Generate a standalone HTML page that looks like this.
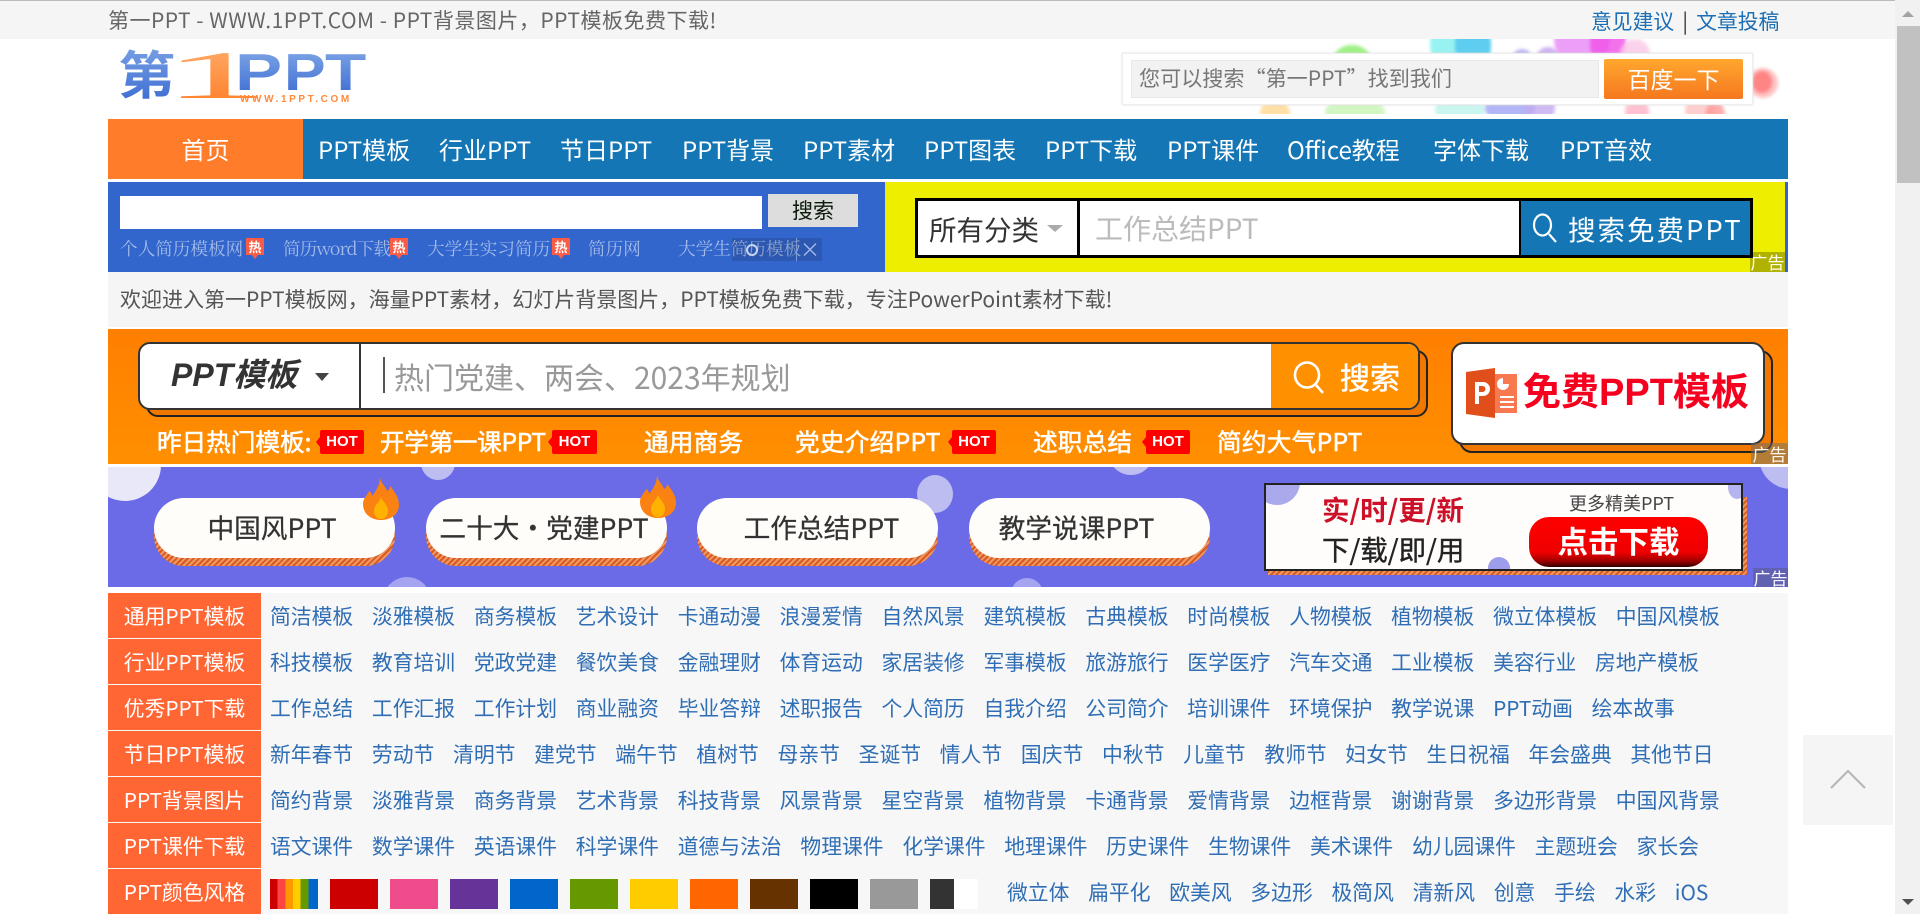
<!DOCTYPE html>
<html lang="zh-CN"><head><meta charset="utf-8"><title>第一PPT</title>
<style>
html,body{margin:0;padding:0;width:1920px;height:914px;overflow:hidden;background:#fff}
body{position:relative;font-family:"Noto Sans CJK SC","Liberation Sans",sans-serif;color:#333}
.a{position:absolute;white-space:nowrap}
.nav{top:119px;height:60px;line-height:59px;font-size:24px;color:#fff}
.row{position:absolute;left:108px;width:1680px;height:45px}
.lab{position:absolute;left:0;top:0;width:153px;height:45px;background:#ff6633;color:#fff;text-align:center;line-height:45px;font-size:20.8px}
.ln{position:absolute;left:162px;top:0;height:45px;line-height:45px;font-size:20.8px;color:#2f6eb5;display:flex;gap:18.74px;white-space:nowrap}
.sw{position:absolute;top:879px;width:48px;height:30px}
.ss{top:238px;line-height:22px;font-size:17.6px;font-family:"Noto Serif CJK SC",serif;color:#a3bbe9}
.hot{position:absolute;top:238px;width:18px;height:17px;background:#fb5c45;color:#fff;font-size:13px;line-height:17px;text-align:center;font-weight:700}
.hot:after{content:"";position:absolute;left:6px;top:17px;border:3px solid transparent;border-top:4px solid #fb5c45}
.ad{position:absolute;color:#fff;font-size:17px;text-align:center;opacity:.95}
.bt{top:427px;line-height:28px;font-size:24.6px;color:#fff;font-weight:400;-webkit-text-stroke:.55px #fff}
.hb{position:absolute;top:430px;height:24px;line-height:24px;background:#f00;color:#fff;font-size:15px;font-weight:700;text-align:center;border-radius:2px;font-family:"Liberation Sans",sans-serif}
.hb:before{content:"";position:absolute;left:-4px;top:7px;border:5px solid transparent;border-left:0;border-right:4px solid #f00}
.c{position:absolute;border-radius:50%}
.pill{position:absolute;top:498px;width:241px;height:60px;background:#fffdf9;border-radius:30px;text-align:center;line-height:58px;font-size:26.7px;color:#333;-webkit-text-stroke:.25px #333}
.ps{position:absolute;top:506px;width:241px;height:60px;border-radius:30px;background:repeating-linear-gradient(135deg,#d95a24 0 2px,#ee9a60 2px 4px)}
.b{position:absolute;border-radius:50%;filter:blur(1.5px);opacity:.8}
</style></head><body>

<!-- top bar -->
<div class="a" style="left:0;top:0;width:1895px;height:39px;background:#f5f5f5;border-top:1px solid #bbb;box-sizing:border-box"></div>
<div class="a" style="left:108px;top:0;line-height:40px;font-size:21px;letter-spacing:.5px;color:#666">第一PPT - WWW.1PPT.COM - PPT背景图片，PPT模板免费下载!</div>
<div class="a" style="left:1591px;top:0;line-height:40px;font-size:20.8px;word-spacing:3.5px;color:#1c6fb4">意见建议 <span style="color:#333">|</span> 文章投稿</div>

<!-- logo -->
<svg class="a" style="left:110px;top:40px" width="270" height="70" viewBox="0 0 270 70">
<defs>
<linearGradient id="g1" x1="0" y1="0" x2="0" y2="1"><stop offset="0" stop-color="#86abe9"/><stop offset="1" stop-color="#3567cf"/></linearGradient>
<linearGradient id="g2" x1="0" y1="0" x2="0" y2="1"><stop offset="0" stop-color="#ffb070"/><stop offset="1" stop-color="#ff7a22"/></linearGradient>
</defs>
<text transform="translate(8,54) scale(1.1,1)" font-family="Noto Sans CJK SC" font-weight="700" font-size="52" fill="url(#g1)">第</text>
<text transform="translate(52,58) scale(3.2,1)" font-family="Liberation Serif" font-weight="400" font-size="68" fill="url(#g2)">1</text>
<text transform="translate(125,50) scale(1.36,1)" font-family="Liberation Sans" font-weight="700" font-size="52" fill="url(#g1)">P</text>
<text transform="translate(174,50) scale(1.2,1)" font-family="Liberation Sans" font-weight="700" font-size="52" fill="url(#g1)">P</text>
<text transform="translate(215,50) scale(1.3,1)" font-family="Liberation Sans" font-weight="700" font-size="52" fill="url(#g1)">T</text>
<text x="130" y="62" font-family="Liberation Sans" font-weight="700" font-size="10" letter-spacing="2.6" fill="#ff8a3c">WWW.1PPT.COM</text>
</svg>

<!-- bubbles -->
<div class="a" style="left:1200px;top:39px;width:600px;height:75px;overflow:hidden">
<div class="b" style="left:130px;top:6px;width:44px;height:44px;background:#86ec66"></div>
<div class="b" style="left:230px;top:-24px;width:60px;height:60px;background:#7ff0f0"></div>
<div class="b" style="left:255px;top:-24px;width:36px;height:60px;background:#4fc4f0"></div>
<div class="b" style="left:312px;top:10px;width:20px;height:20px;background:#a8a4f0"></div>
<div class="b" style="left:336px;top:8px;width:24px;height:24px;background:#c4a0ee"></div>
<div class="b" style="left:354px;top:-30px;width:56px;height:60px;background:#e888f4"></div>
<div class="b" style="left:390px;top:-22px;width:36px;height:52px;background:#f050e8"></div>
<div class="b" style="left:420px;top:0;width:30px;height:30px;background:#fbc8e8"></div>
<div class="b" style="left:548px;top:29px;width:30px;height:30px;background:#ffb4b4"></div>
<div class="b" style="left:552px;top:32px;width:20px;height:22px;background:#ff8484;opacity:1"></div>
<div class="b" style="left:60px;top:60px;width:30px;height:30px;background:#ffd890"></div>
<div class="b" style="left:125px;top:58px;width:60px;height:30px;background:#c8f4b4"></div>
<div class="b" style="left:235px;top:56px;width:50px;height:30px;background:#bcf4ec"></div>
<div class="b" style="left:285px;top:54px;width:50px;height:30px;background:#9fa4f4"></div>
<div class="b" style="left:325px;top:54px;width:30px;height:30px;background:#c4aaf0"></div>
<div class="b" style="left:425px;top:58px;width:24px;height:30px;background:#ffb4c8"></div>
<div class="b" style="left:485px;top:56px;width:30px;height:30px;background:#ffc4c4"></div>
<div class="b" style="left:505px;top:62px;width:20px;height:30px;background:#ff9a9a"></div>
</div>

<!-- baidu box -->
<div class="a" style="left:1122px;top:53px;width:631px;height:52px;background:#fff;border:1px solid #eee;box-sizing:border-box;box-shadow:0 0 2px #ddd"></div>
<div class="a" style="left:1131px;top:60px;width:468px;height:38px;background:#f2f2f2;border:1px solid #e8e8e8;box-sizing:border-box"></div>
<div class="a" style="left:1139px;top:60px;line-height:37px;font-size:21.1px;color:#777">您可以搜索“第一PPT”找到我们</div>
<div class="a" style="left:1604px;top:59px;width:139px;height:40px;background:linear-gradient(#ffa72e,#f5781f);border-radius:2px;color:#fff;text-align:center;line-height:39px;font-size:23px">百度一下</div>

<!-- nav -->
<div class="a" style="left:108px;top:119px;width:1680px;height:60px;background:#1476b5"></div>
<div class="a" style="left:108px;top:119px;width:195px;height:60px;background:#ff7c2a"></div>
<div class="a nav" style="left:108px;width:195px;text-align:center">首页</div>
<div class="a nav" style="left:318px">PPT模板</div>
<div class="a nav" style="left:439px">行业PPT</div>
<div class="a nav" style="left:560px">节日PPT</div>
<div class="a nav" style="left:682px">PPT背景</div>
<div class="a nav" style="left:803px">PPT素材</div>
<div class="a nav" style="left:924px">PPT图表</div>
<div class="a nav" style="left:1045px">PPT下载</div>
<div class="a nav" style="left:1167px">PPT课件</div>
<div class="a nav" style="left:1287px">Office教程</div>
<div class="a nav" style="left:1433px">字体下载</div>
<div class="a nav" style="left:1560px">PPT音效</div>

<!-- search strip -->
<div class="a" style="left:108px;top:182px;width:1680px;height:90px;background:#3366cc"></div>
<div class="a" style="left:885px;top:182px;width:900px;height:90px;background:#eeee00"></div>
<div class="a" style="left:120px;top:196px;width:642px;height:33px;background:#fff"></div>
<div class="a" style="left:768px;top:194px;width:90px;height:33px;background:#ddd;text-align:center;line-height:33px;font-size:21px;color:#0a1a0a">搜索</div>
<div class="a ss" style="left:120px">个人简历模板网</div><div class="hot" style="left:246px">热</div>
<div class="a ss" style="left:283px;letter-spacing:-.9px">简历word下载</div><div class="hot" style="left:390px">热</div>
<div class="a ss" style="left:427px">大学生实习简历</div><div class="hot" style="left:552px">热</div>
<div class="a ss" style="left:588px">简历网</div>
<div class="a ss" style="left:678px">大学生简历模板</div>
<div class="a" style="left:732px;top:238px;width:90px;height:23px;background:rgba(0,0,0,.13)"></div>
<div class="a" style="left:746px;top:244px;width:8px;height:8px;border:2px solid #c8d4f0;border-radius:50%"></div>
<div class="a" style="left:796px;top:238px;width:1px;height:23px;background:#7f9bd8"></div>
<div class="a" style="left:800px;top:236px;line-height:26px;font-size:20px;color:#a3bbe9">×</div>

<!-- yellow search -->
<div class="a" style="left:915px;top:198px;width:838px;height:60px;background:#000"></div>
<div class="a" style="left:918px;top:201px;width:159px;height:54px;background:#fff"></div>
<div class="a" style="left:1080px;top:201px;width:439px;height:54px;background:#fff"></div>
<div class="a" style="left:1521px;top:201px;width:229px;height:54px;background:#1476b5"></div>
<div class="a" style="left:929px;top:201px;line-height:54px;font-size:27.5px;color:#333">所有分类</div>
<div class="a" style="left:1047px;top:225px;border:8px solid transparent;border-top:7px solid #aaa;border-bottom:0"></div>
<div class="a" style="left:1095px;top:201px;line-height:55px;font-size:28px;color:#bbb">工作总结PPT</div>
<svg class="a" style="left:1530px;top:212px" width="32" height="32" viewBox="0 0 32 32" fill="none" stroke="#fff" stroke-width="2.2"><ellipse cx="12.500" cy="13" rx="8.500" ry="10.500"/><path d="M19 22l7 8"/></svg>
<div class="a" style="left:1568px;top:201px;line-height:55px;font-size:27.5px;color:#fff;letter-spacing:2px">搜索免费PPT</div>
<div class="ad" style="left:1750px;top:252px;width:35px;height:20px;line-height:20px;background:rgba(0,0,0,.27)">广告</div>

<!-- welcome -->
<div class="a" style="left:108px;top:272px;width:1680px;height:55px;background:#f5f5f5"></div>
<div class="a" style="left:120px;top:272px;line-height:55px;font-size:21px;color:#555">欢迎进入第一PPT模板网，海量PPT素材，幻灯片背景图片，PPT模板免费下载，专注PowerPoint素材下载!</div>

<!-- orange banner -->
<div class="a" style="left:108px;top:329px;width:1680px;height:135px;background:linear-gradient(#ff7f00,#ff8f00)"></div>
<div class="a" style="left:146px;top:350px;width:1282px;height:67px;background:#f07800;border:2px solid #222;border-radius:12px;box-sizing:border-box"></div>
<div class="a" style="left:138px;top:342px;width:1282px;height:68px;background:#fff;border:2px solid #333;border-radius:12px;box-sizing:border-box;overflow:hidden">
  <div class="a" style="left:219px;top:0;width:2px;height:66px;background:#333"></div>
  <div class="a" style="left:1131px;top:0;width:150px;height:66px;background:#ff9000"></div>
</div>
<div class="a" style="left:171px;top:350px;line-height:50px;font-size:32px;font-weight:700;font-style:italic;font-family:'Liberation Sans','Noto Sans CJK SC',sans-serif;color:#333">PPT模板</div>
<div class="a" style="left:315px;top:373px;border:7px solid transparent;border-top:8px solid #444;border-bottom:0"></div>
<div class="a" style="left:383px;top:357px;width:2px;height:36px;background:#555"></div>
<div class="a" style="left:394px;top:351px;line-height:50px;font-size:30px;color:#999">热门党建、两会、2023年规划</div>
<svg class="a" style="left:1292px;top:360px" width="36" height="34" viewBox="0 0 36 34" fill="none" stroke="#fff" stroke-width="2.6"><ellipse cx="15" cy="15" rx="12" ry="12.500"/><path d="M24 25l7 8"/></svg>
<div class="a" style="left:1340px;top:351px;line-height:50px;font-size:30px;-webkit-text-stroke:.5px #fff;color:#fff">搜索</div>

<div class="a bt" style="left:157px">昨日热门模板:</div><div class="hb" style="left:320px;width:44px">HOT</div>
<div class="a bt" style="left:380px;letter-spacing:-.3px">开学第一课PPT</div><div class="hb" style="left:552px;width:45px">HOT</div>
<div class="a bt" style="left:644px;letter-spacing:.2px">通用商务</div>
<div class="a bt" style="left:795px;letter-spacing:.3px">党史介绍PPT</div><div class="hb" style="left:952px;width:44px">HOT</div>
<div class="a bt" style="left:1033px;letter-spacing:.2px">述职总结</div><div class="hb" style="left:1146px;width:44px">HOT</div>
<div class="a bt" style="left:1217px;letter-spacing:.3px">简约大气PPT</div>

<div class="a" style="left:1459px;top:350px;width:314px;height:103px;background:#f07800;border:2px solid #222;border-radius:13px;box-sizing:border-box"></div>
<div class="a" style="left:1451px;top:342px;width:314px;height:103px;background:#fff;border:2px solid #333;border-radius:13px;box-sizing:border-box"></div>
<svg class="a" style="left:1465px;top:367px" width="53" height="52" viewBox="0 0 53 52">
<rect x="29" y="7" width="23" height="39" fill="#f8794f"/>
<path d="M38 11a6 6 0 1 0 6 6h-6z" fill="#fff"/><path d="M35 29h14v2H35zM35 34h14v2H35zM35 39h14v2H35z" fill="#fff"/>
<path d="M1 5L30 1V51L1 47Z" fill="#e04e1c"/>
<path d="M10 15h8a6 6 0 0 1 0 14h-4v8h-4zM14 19v6h3.500a3 3 0 0 0 0-6z" fill="#fff"/>
</svg>
<div class="a" style="left:1523px;top:364px;line-height:58px;font-size:38px;font-weight:700;font-family:'Liberation Sans','Noto Sans CJK SC',sans-serif;color:#f5001e">免费PPT模板</div>
<div class="ad" style="left:1751px;top:443px;width:37px;height:21px;line-height:21px;background:rgba(110,110,110,.55)">广告</div>

<!-- purple banner -->
<div class="a" style="left:108px;top:467px;width:1680px;height:120px;background:#6b6be8;overflow:hidden">
  <div class="c" style="left:-19px;top:-38px;width:72px;height:72px;background:#e8e8f8"></div>
  <div class="c" style="left:313px;top:-21px;width:34px;height:34px;background:#bdbdf2"></div>
  <div class="c" style="left:275px;top:110px;width:48px;height:48px;background:#a4a4f0"></div>
  <div class="c" style="left:809px;top:8px;width:36px;height:38px;background:#bdbdf2"></div>
  <div class="c" style="left:1000px;top:-38px;width:46px;height:46px;background:#bdbdf2"></div>
  <div class="c" style="left:903px;top:111px;width:32px;height:32px;background:#a4a4f0"></div>
  <div class="c" style="left:1651px;top:-42px;width:64px;height:64px;background:#bdbdf2"></div>
</div>
<div class="ps" style="left:154px"></div><div class="pill" style="left:154px;text-indent:-5px">中国风PPT</div>
<div class="ps" style="left:426px"></div><div class="pill" style="left:426px;text-indent:-5px">二十大・党建PPT</div>
<div class="ps" style="left:697px"></div><div class="pill" style="left:697px;text-indent:8px">工作总结PPT</div>
<div class="ps" style="left:969px"></div><div class="pill" style="left:969px;text-indent:-26px">教学说课PPT</div>
<svg class="a" style="left:363px;top:477px" width="36" height="43" viewBox="0 0 36 43"><path d="M17 0C18 7 22 8 24 14C26 13 27 11 27 9C31 14 36 20 36 28C36 37 28 43 18 43C7 43 0 36 0 27C0 21 4 19 6 14C8 15 9 17 9 19C13 14 17 8 17 0Z" fill="#fa8212"/><path d="M18 20C20 25 25 28 25 34C25 39 22 42 18 42C14 42 11 39 11 34C11 28 16 26 18 20Z" fill="#ffb300"/></svg>
<svg class="a" style="left:640px;top:475px" width="36" height="43" viewBox="0 0 36 43"><path d="M17 0C18 7 22 8 24 14C26 13 27 11 27 9C31 14 36 20 36 28C36 37 28 43 18 43C7 43 0 36 0 27C0 21 4 19 6 14C8 15 9 17 9 19C13 14 17 8 17 0Z" fill="#fa8212"/><path d="M18 20C20 25 25 28 25 34C25 39 22 42 18 42C14 42 11 39 11 34C11 28 16 26 18 20Z" fill="#ffb300"/></svg>

<div class="a" style="left:1268px;top:497px;width:479px;height:78px;background:repeating-linear-gradient(135deg,#d95a24 0 2px,#ee9a60 2px 4px)"></div>
<div class="a" style="left:1264px;top:483px;width:479px;height:88px;background:#fffdfb;border:2px solid #222;box-sizing:border-box;overflow:hidden">
  <div class="c" style="left:-12px;top:-26px;width:46px;height:46px;background:#a9a9ec"></div>
  <div class="c" style="left:462px;top:-10px;width:18px;height:24px;background:#b4b4ee"></div>
  <div class="c" style="left:222px;top:72px;width:22px;height:22px;background:#9d9dec"></div>
</div>
<div class="a" style="left:1322px;top:488px;line-height:40px;font-size:27.5px;font-weight:700;color:#cc1028">实/时/更/新</div>
<div class="a" style="left:1322px;top:528px;line-height:40px;font-size:27.5px;-webkit-text-stroke:.4px #222;color:#222">下/载/即/用</div>
<div class="a" style="left:1569px;top:490px;line-height:26px;font-size:18px;color:#444">更多精美PPT</div>
<div class="a" style="left:1529px;top:517px;width:179px;height:50px;border-radius:20px;background:linear-gradient(#ff0000 0,#f00000 70%,#a00000 88%,#300000 100%);color:#fff;text-align:center;font-weight:700;font-size:30.5px;line-height:46px">点击下载</div>
<div class="ad" style="left:1753px;top:568px;width:35px;height:19px;line-height:19px;background:rgba(90,90,130,.55)">广告</div>

<!-- category rows -->
<div class="a" style="left:108px;top:593px;width:1680px;height:321px;background:#f7f7f7"></div>

<div class="row" style="top:593px"><div class="lab">通用PPT模板</div><div class="ln"><span>简洁模板</span><span>淡雅模板</span><span>商务模板</span><span>艺术设计</span><span>卡通动漫</span><span>浪漫爱情</span><span>自然风景</span><span>建筑模板</span><span>古典模板</span><span>时尚模板</span><span>人物模板</span><span>植物模板</span><span>微立体模板</span><span>中国风模板</span></div></div>
<div class="row" style="top:639px"><div class="lab">行业PPT模板</div><div class="ln"><span>科技模板</span><span>教育培训</span><span>党政党建</span><span>餐饮美食</span><span>金融理财</span><span>体育运动</span><span>家居装修</span><span>军事模板</span><span>旅游旅行</span><span>医学医疗</span><span>汽车交通</span><span>工业模板</span><span>美容行业</span><span>房地产模板</span></div></div>
<div class="row" style="top:685px"><div class="lab">优秀PPT下载</div><div class="ln"><span>工作总结</span><span>工作汇报</span><span>工作计划</span><span>商业融资</span><span>毕业答辩</span><span>述职报告</span><span>个人简历</span><span>自我介绍</span><span>公司简介</span><span>培训课件</span><span>环境保护</span><span>教学说课</span><span>PPT动画</span><span>绘本故事</span></div></div>
<div class="row" style="top:731px"><div class="lab">节日PPT模板</div><div class="ln"><span>新年春节</span><span>劳动节</span><span>清明节</span><span>建党节</span><span>端午节</span><span>植树节</span><span>母亲节</span><span>圣诞节</span><span>情人节</span><span>国庆节</span><span>中秋节</span><span>儿童节</span><span>教师节</span><span>妇女节</span><span>生日祝福</span><span>年会盛典</span><span>其他节日</span></div></div>
<div class="row" style="top:777px"><div class="lab">PPT背景图片</div><div class="ln"><span>简约背景</span><span>淡雅背景</span><span>商务背景</span><span>艺术背景</span><span>科技背景</span><span>风景背景</span><span>星空背景</span><span>植物背景</span><span>卡通背景</span><span>爱情背景</span><span>边框背景</span><span>谢谢背景</span><span>多边形背景</span><span>中国风背景</span></div></div>
<div class="row" style="top:823px"><div class="lab">PPT课件下载</div><div class="ln"><span>语文课件</span><span>数学课件</span><span>英语课件</span><span>科学课件</span><span>道德与法治</span><span>物理课件</span><span>化学课件</span><span>地理课件</span><span>历史课件</span><span>生物课件</span><span>美术课件</span><span>幼儿园课件</span><span>主题班会</span><span>家长会</span></div></div>
<div class="row" style="top:869px"><div class="lab">PPT颜色风格</div><div class="ln" style="left:899px"><span>微立体</span><span>扁平化</span><span>欧美风</span><span>多边形</span><span>极简风</span><span>清新风</span><span>创意</span><span>手绘</span><span>水彩</span><span>iOS</span></div></div>

<div class="sw" style="left:270px;background:linear-gradient(90deg,#c00 0 16%,#f44 16% 32%,#f90 32% 48%,#fc0 48% 64%,#690 64% 80%,#06c 80%)"></div>
<div class="sw" style="left:330px;background:#cc0000"></div>
<div class="sw" style="left:390px;background:#ee4c8a"></div>
<div class="sw" style="left:450px;background:#663399"></div>
<div class="sw" style="left:510px;background:#0066cc"></div>
<div class="sw" style="left:570px;background:#669900"></div>
<div class="sw" style="left:630px;background:#ffcc00"></div>
<div class="sw" style="left:690px;background:#ff6600"></div>
<div class="sw" style="left:750px;background:#663300"></div>
<div class="sw" style="left:810px;background:#000"></div>
<div class="sw" style="left:870px;background:#999"></div>
<div class="sw" style="left:930px;background:linear-gradient(90deg,#333 0 50%,#fff 50%)"></div>

<!-- back to top -->
<div class="a" style="left:1803px;top:735px;width:90px;height:90px;background:#f5f5f5"></div>
<svg class="a" style="left:1825px;top:765px" width="46" height="30" viewBox="0 0 46 30" fill="none" stroke="#b4b4b4" stroke-width="2"><path d="M6 23L23 6L40 23"/></svg>

<!-- scrollbar -->
<div class="a" style="left:1895px;top:0;width:25px;height:914px;background:#f1f1f1"></div>
<div class="a" style="left:1897px;top:26px;width:23px;height:157px;background:#c1c1c1"></div>
<div class="a" style="left:1902px;top:11px;border:6px solid transparent;border-bottom:6px solid #a3a3a3;border-top:0"></div>
<div class="a" style="left:1902px;top:899px;border:6px solid transparent;border-top:6px solid #505050;border-bottom:0"></div>
</body></html>
